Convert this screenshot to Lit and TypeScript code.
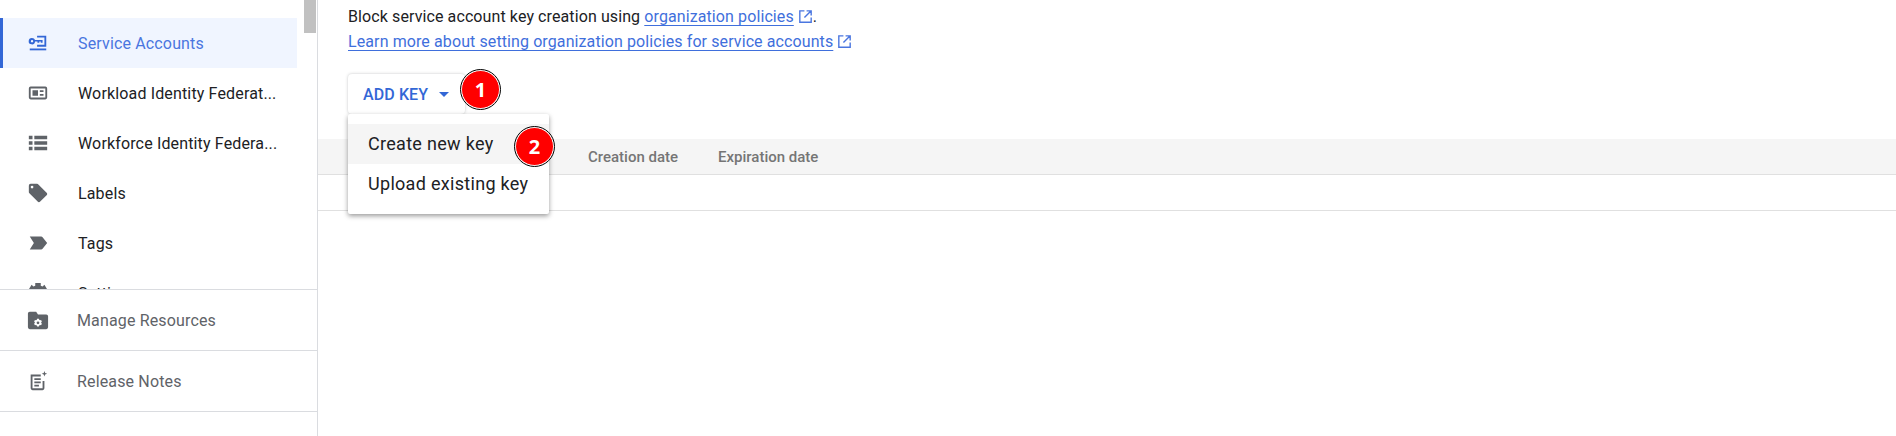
import { LitElement, html, css, svg } from 'lit';
import { customElement } from 'lit/decorators.js';

const ICONS: Record<string, unknown> = {
  iam: svg`<path d="M3 4h18v3H3z"/>`,
  key: svg`<path fill-rule="evenodd" d="M11 4h10v12H11v-2h8V6h-8z"/><path fill-rule="evenodd" d="M5.500 6.500a3.500 3.500 0 0 1 3.300 2.300H17v3h-2v-1.400h-1.600v1.400h-2v-1.400H8.800a3.500 3.500 0 1 1-3.300-3.900zm0 2.200a1.300 1.300 0 1 0 0 2.600 1.300 1.300 0 0 0 0-2.600z"/><path d="M3 18h18v2H3z"/>`,
  card: svg`<path fill-rule="evenodd" d="M4 5h16a2 2 0 0 1 2 2v10a2 2 0 0 1-2 2H4a2 2 0 0 1-2-2V7a2 2 0 0 1 2-2zm0 2v10h16V7zm2 2h6v6H6zm8 0h4v2h-4zm0 4h4v2h-4z"/>`,
  list: svg`<path d="M2 4h4v4H2zm6 0h14v4H8zM2 10h4v4H2zm6 0h14v4H8zM2 16h4v4H2zm6 0h14v4H8z"/>`,
  label: svg`<path fill-rule="evenodd" d="M21.400 11.600l-9-9C12 2.200 11.500 2 11 2H4a2 2 0 0 0-2 2v7c0 .6.200 1.100.6 1.400l9 9c.4.4.9.6 1.400.6s1.100-.2 1.400-.6l7-7c.4-.4.6-.9.6-1.400s-.2-1.100-.6-1.400zM5.500 7a1.500 1.500 0 1 1 0-3 1.500 1.500 0 0 1 0 3z"/>`,
  tag: svg`<path d="M3 5h12.500c.6 0 1.100.3 1.500.8L22 12l-5 6.200c-.4.5-.9.8-1.500.8H3l4.500-7z"/>`,
  gear: svg`<path d="M9 1h6v3l2 1 2-2 3 5-3 1v3H5V9L2 8l3-5 2 2 2-1z"/>`,
  folder: svg`<path fill-rule="evenodd" d="M3 3h7l2 3h9a2 2 0 0 1 2 2v12a2 2 0 0 1-2 2H3a2 2 0 0 1-2-2V5a2 2 0 0 1 2-2zm8 7.500l-.3 1.200-.9.5-1.100-.3-1 1.600.8.8v1l-.8.8 1 1.600 1.100-.3.9.5.3 1.200h2l.3-1.200.9-.5 1.100.3 1-1.600-.8-.8v-1l.8-.8-1-1.600-1.100.3-.9-.5-.3-1.200zm1 3a1.500 1.500 0 1 1 0 3 1.500 1.500 0 0 1 0-3z"/>`,
  notes: svg`<path fill-rule="evenodd" d="M4 5h11v2H6v13h11v-8h2v8a2 2 0 0 1-2 2H6a2 2 0 0 1-2-2z"/><path d="M8 9h7v2H8zm0 3.500h7v2H8zM8 16h5v2H8z"/><path d="M19 1l.8 2.200L22 4l-2.200.8L19 7l-.8-2.200L16 4l2.200-.8z"/>`,
};

const icon = (name: string) => html`<svg class="icon" viewBox="0 0 24 24" fill="currentColor">${ICONS[name]}</svg>`;

const external = html`<svg class="ext" viewBox="0 0 14 14" fill="none" stroke="currentColor" stroke-width="1.300"><path d="M6 1.700H1.700v10.600h10.600V8M8 1.700h4.300V6M12.300 1.700L6 8"/></svg>`;

@customElement('app-root')
export class AppRoot extends LitElement {
  static styles = css`
    :host {
      display: flex;
      width: 1896px;
      height: 436px;
      overflow: hidden;
      background: #fff;
      font-family: Roboto, "Liberation Sans", sans-serif;
      color: #202124;
    }
    .side {
      width: 318px;
      flex: none;
      box-sizing: border-box;
      border-right: 1px solid #dadce0;
      display: flex;
      flex-direction: column;
    }
    .scroll {
      height: 289px;
      flex: none;
      display: flex;
      overflow: hidden;
    }
    .list {
      width: 297px;
      flex: none;
      margin-top: -32px;
    }
    .gutter {
      flex: 1;
      padding-left: 7px;
    }
    .thumb {
      width: 12px;
      height: 33px;
      background: #c1c1c1;
    }
    .item {
      height: 50px;
      display: flex;
      align-items: center;
      font-size: 16px;
      letter-spacing: 0.15px;
      color: #202124;
      padding-left: 24px;
      border-left: 3px solid transparent;
      box-sizing: border-box;
      white-space: nowrap;
    }
    .item.active {
      background: #f0f5ff;
      border-left-color: #3367d6;
      color: #4a76e0;
    }
    .item .icon {
      color: #5f6368;
    }
    .item.active .icon {
      color: #3367d6;
    }
    .icon {
      width: 22px;
      height: 22px;
      flex: none;
      margin-right: 29px;
    }
    .foot {
      height: 61px;
      flex: none;
      display: flex;
      align-items: center;
      padding-left: 27px;
      border-top: 1px solid #dadce0;
      box-sizing: border-box;
      font-size: 16px;
      letter-spacing: 0.15px;
      color: #5f6368;
    }
    .foot .icon {
      margin-right: 28px;
    }
    .main {
      flex: 1;
      position: relative;
      padding: 7px 0 0 30px;
      font-size: 16px;
      letter-spacing: 0.1px;
    }
    .line {
      height: 25px;
      line-height: 20px;
      white-space: nowrap;
    }
    a {
      color: #3f6fdc;
      text-decoration: underline;
      text-underline-offset: 3px;
    }
    .ext {
      width: 15px;
      height: 15px;
      color: #4a76e0;
      margin-left: 4px;
      vertical-align: -2px;
    }
    .add {
      margin-top: 17px;
      width: 117px;
      height: 40px;
      box-sizing: border-box;
      display: flex;
      align-items: center;
      padding-left: 15px;
      border-radius: 4px;
      box-shadow: 0 0 3px rgba(60, 64, 67, 0.3);
      color: #3367d6;
      font-size: 16px;
      font-weight: 500;
      letter-spacing: 0.1px;
    }
    .caret {
      width: 0;
      height: 0;
      margin-left: 11px;
      border-left: 5px solid transparent;
      border-right: 5px solid transparent;
      border-top: 5px solid #3367d6;
    }
    .thead {
      margin: 25px 0 0 -30px;
      height: 36px;
      box-sizing: border-box;
      background: #f5f5f5;
      border-bottom: 1px solid #e0e0e0;
      display: flex;
      align-items: center;
      padding-left: 270px;
      font-size: 15px;
      font-weight: 500;
      letter-spacing: 0;
      color: #757575;
    }
    .thead span {
      width: 130px;
    }
    .row {
      margin-left: -30px;
      height: 36px;
      box-sizing: border-box;
      border-bottom: 1px solid #e0e0e0;
    }
    .menu {
      position: absolute;
      left: 30px;
      top: 114px;
      width: 201px;
      height: 100px;
      box-sizing: border-box;
      padding-top: 10px;
      background: #fff;
      border-radius: 2px;
      box-shadow: 0 2px 5px rgba(0, 0, 0, 0.4);
      font-size: 18px;
      letter-spacing: 0.3px;
      color: #202124;
    }
    .menu div {
      height: 40px;
      display: flex;
      align-items: center;
      padding-left: 20px;
      padding-bottom: 2px;
      box-sizing: border-box;
    }
    .menu .hover {
      background: #f5f5f5;
    }
    .badge {
      position: absolute;
      width: 37px;
      height: 37px;
      border: 1.500px solid #fff;
      outline: 1.500px solid #000;
      border-radius: 50%;
      background: #f00;
      color: #fff;
      font-family: "Open Sans", Roboto, sans-serif;
      font-size: 20px;
      font-weight: 700;
      letter-spacing: 0;
      display: flex;
      align-items: center;
      justify-content: center;
    }
    .b1 {
      left: 143px;
      top: 70px;
    }
    .b2 {
      left: 197px;
      top: 127px;
    }
  `;

  render() {
    return html`
      <aside class="side">
        <div class="scroll">
          <div class="list">
            <div class="item">${icon('iam')}Roles</div>
            <div class="item active">${icon('key')}Service Accounts</div>
            <div class="item">${icon('card')}Workload Identity Federat...</div>
            <div class="item">${icon('list')}Workforce Identity Federa...</div>
            <div class="item">${icon('label')}Labels</div>
            <div class="item">${icon('tag')}Tags</div>
            <div class="item">${icon('gear')}Settings</div>
          </div>
          <div class="gutter"><div class="thumb"></div></div>
        </div>
        <div class="foot">${icon('folder')}Manage Resources</div>
        <div class="foot">${icon('notes')}Release Notes</div>
        <div class="foot"></div>
      </aside>
      <main class="main">
        <div class="line">Block service account key creation using <a>organization policies</a>${external}.</div>
        <div class="line"><a>Learn more about setting organization policies for service accounts</a>${external}</div>
        <div class="add">ADD KEY<span class="caret"></span></div>
        <div class="thead"><span>Creation date</span><span>Expiration date</span></div>
        <div class="row"></div>
        <div class="menu">
          <div class="hover">Create new key</div>
          <div>Upload existing key</div>
        </div>
        <div class="badge b1">1</div>
        <div class="badge b2">2</div>
      </main>
    `;
  }
}
